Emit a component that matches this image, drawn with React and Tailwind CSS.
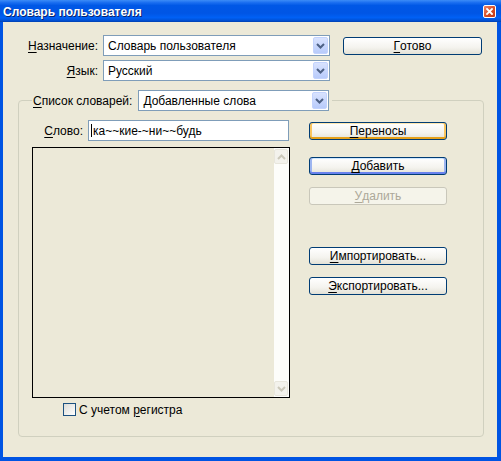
import React from 'react';

const FONT = { fontFamily: '"Liberation Sans", Arial, sans-serif' };

function Chevron({ color = '#4D6185' }) {
  return (
    <svg width="9" height="6" viewBox="0 0 9 6">
      <polyline points="1,1 4.5,4.5 8,1" fill="none" stroke={color} strokeWidth="2" />
    </svg>
  );
}

function Combo({ value, className = '' }) {
  return (
    <div className={`flex h-[21px] items-center border border-[#7F9DB9] bg-white ${className}`}>
      <span className="flex-1 pl-[4px] text-[12px] leading-none text-black">{value}</span>
      <div className="mr-[1px] flex h-[17px] w-[15px] items-center justify-center rounded-[2px] border border-[#C3D3FD] bg-[linear-gradient(180deg,#D9E3FE,#B8CBFB)]">
        <Chevron />
      </div>
    </div>
  );
}

function XpButton({ children, variant = 'normal', className = '' }) {
  const look = {
    normal: 'border-[#003C74] bg-[linear-gradient(180deg,#FFFFFF,#F4F3EE_60%,#E3E1D6)] text-black',
    hot: 'border-[#003C74] bg-[linear-gradient(180deg,#FFFFFF,#F4F3EE_60%,#E3E1D6)] text-black shadow-[inset_0_-2px_0_#E5A01A,inset_2px_0_0_#F9C560,inset_-2px_0_0_#F9C560,inset_0_1px_0_#FFE7B0]',
    default: 'border-[#003C74] bg-[linear-gradient(180deg,#FFFFFF,#F4F3EE_60%,#E3E1D6)] text-black shadow-[inset_0_-2px_0_#6982EE,inset_2px_0_0_#9DB5F0,inset_-2px_0_0_#9DB5F0,inset_0_1px_0_#CEE7FF]',
    disabled: 'border-[#C9C7BA] bg-[#F5F4EA] text-[#ACA899]',
  }[variant];
  return (
    <div className={`flex h-[18px] items-center justify-center rounded-[3px] border text-[12px] leading-none ${look} ${className}`}>
      {children}
    </div>
  );
}

const U = ({ children }) => <span className="underline underline-offset-[2px]">{children}</span>;

function ScrollArrow({ up }) {
  return (
    <div className="flex h-[15px] w-[14px] items-center justify-center rounded-[2px] border border-[#E8E6DC] bg-[#F3F2EC]">
      <svg width="9" height="6" viewBox="0 0 9 6" className={up ? 'rotate-180' : ''}>
        <polyline points="1,1 4.5,4.5 8,1" fill="none" stroke="#CBC8BA" strokeWidth="2" />
      </svg>
    </div>
  );
}

export default function App() {
  return (
    <div className="flex h-[461px] w-[501px] flex-col bg-[#0054E3]" style={FONT}>
      {/* Title bar */}
      <div className="flex h-[22px] items-center justify-between bg-[linear-gradient(180deg,#3C8CF7_0%,#1A6EF0_12%,#0058E6_25%,#0055E5_60%,#0060F5_80%,#0052D8_92%,#0040B0_100%)] pl-[3px] pr-[5px]">
        <span className="pt-[1px] text-[12px] font-bold leading-none text-white [text-shadow:1px_1px_#0A246A]">
          Словарь пользователя
        </span>
        <div className="flex h-[13px] w-[13px] items-center justify-center rounded-[2px] border border-white bg-[linear-gradient(135deg,#EE8468,#D44A22_60%,#C0391A)]">
          <svg width="7" height="7" viewBox="0 0 7 7">
            <path d="M1 1L6 6M6 1L1 6" stroke="white" strokeWidth="1.8" strokeLinecap="square" />
          </svg>
        </div>
      </div>

      {/* Client area */}
      <div className="mb-[4px] ml-[3px] mr-[4px] flex flex-1 flex-col bg-[#ECE9D8] pt-[13px] text-[12px] text-black">
        <div className="flex items-start">
          <span className="flex h-[21px] w-[95px] items-center justify-end leading-none">
            <U>Н</U>азначение:
          </span>
          <Combo value="Словарь пользователя" className="ml-[5px] w-[227px]" />
          <XpButton className="ml-[13px] mt-[2px] w-[139px]">
            <U>Г</U>отово
          </XpButton>
        </div>
        <div className="mt-[4px] flex items-start">
          <span className="flex h-[21px] w-[95px] items-center justify-end leading-none">
            <U>Я</U>зык:
          </span>
          <Combo value="Русский" className="ml-[5px] w-[227px]" />
        </div>

        {/* Group box */}
        <fieldset className="ml-[15px] mt-[9px] w-[466px] rounded-[4px] border border-[#D0D0BF] pb-[20px] pl-[13px]">
          <legend className="pl-[1px] pr-[3px]">
            <div className="flex items-center gap-[6px]">
              <span className="leading-none">
                <U>С</U>писок словарей:
              </span>
              <Combo value="Добавленные слова" className="w-[191px]" />
            </div>
          </legend>

          <div className="flex items-start">
            <div className="flex w-[258px] flex-col">
              <div className="mt-[9px] flex items-center justify-end gap-[5px] pr-[1px]">
                <span className="leading-none">
                  <U>С</U>лово:
                </span>
                <div className="flex h-[21px] w-[201px] items-center border border-[#7F9DB9] bg-white pl-[2px]">
                  <span className="mr-[1px] h-[13px] w-[1px] bg-black" />
                  <span className="leading-none">ка~~кие-~ни~~будь</span>
                </div>
              </div>
              <div className="mt-[6px] flex h-[251px] w-[258px] justify-end border border-black bg-[#ECE9D8]">
                <div className="flex w-[15px] flex-col items-start justify-between bg-[#FDFDFA] pb-[1px] pt-[1px]">
                  <ScrollArrow up />
                  <ScrollArrow />
                </div>
              </div>
              <div className="ml-[31px] mt-[5px] flex items-center gap-[3px]">
                <div className="h-[13px] w-[13px] border border-[#1C5180] bg-[linear-gradient(135deg,#DCDCD7,#FFFFFF)]" />
                <span className="leading-none">
                  С учетом <U>р</U>егистра
                </span>
              </div>
            </div>

            <div className="ml-[19px] mt-[11px] flex w-[138px] flex-col">
              <XpButton variant="hot">
                <U>П</U>ереносы
              </XpButton>
              <XpButton variant="default" className="mt-[17px]">
                <U>Д</U>обавить
              </XpButton>
              <XpButton variant="disabled" className="mt-[12px]">
                <U>У</U>далить
              </XpButton>
              <XpButton className="mt-[42px]">
                <U>И</U>мпортировать...
              </XpButton>
              <XpButton className="mt-[12px]">
                <U>Э</U>кспортировать...
              </XpButton>
            </div>
          </div>
        </fieldset>
      </div>
    </div>
  );
}
